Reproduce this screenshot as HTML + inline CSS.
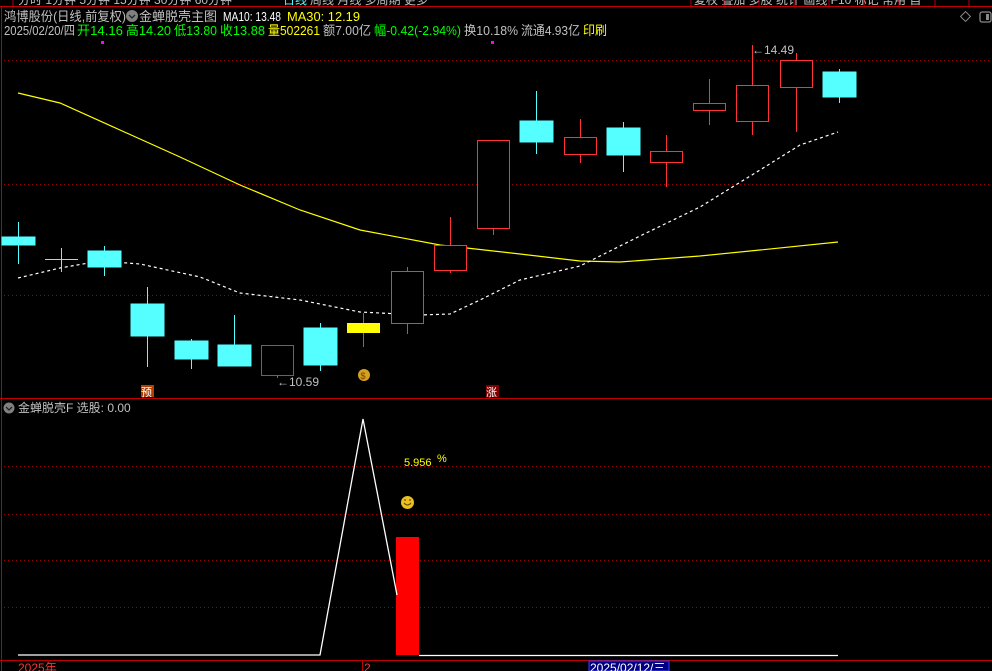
<!DOCTYPE html>
<html><head><meta charset="utf-8"><style>
html,body{margin:0;padding:0;background:#000;width:992px;height:671px;overflow:hidden}
svg{display:block}
text{font-family:"Liberation Sans","Noto Sans CJK SC",sans-serif}
</style></head><body>
<svg width="992" height="671" viewBox="0 0 992 671" xmlns="http://www.w3.org/2000/svg">
<rect width="992" height="671" fill="#000"/>
<g font-size="12" fill="#c0c0c0">
<text x="18" y="4">分时 1分钟 5分钟 15分钟 30分钟 60分钟</text>
<text x="283" y="4" fill="#55ffff">日线</text>
<text x="310" y="4">周线 月线 多周期 更多</text>
<text x="694" y="4">复权 叠加 多股 统计 画线 F10 标记 常用 自</text>
</g>
<line x1="0" y1="6.5" x2="992" y2="6.5" stroke="#c00000"/>
<g stroke="#c00000"><line x1="13" y1="0" x2="13" y2="6"/><line x1="691" y1="0" x2="691" y2="6"/><line x1="724" y1="0" x2="724" y2="6"/><line x1="759" y1="0" x2="759" y2="6"/><line x1="794" y1="0" x2="794" y2="6"/><line x1="829" y1="0" x2="829" y2="6"/><line x1="864" y1="0" x2="864" y2="6"/><line x1="899" y1="0" x2="899" y2="6"/><line x1="935" y1="0" x2="935" y2="6"/><line x1="969" y1="0" x2="969" y2="6"/></g>
<line x1="1.5" y1="7" x2="1.5" y2="671" stroke="#c00000"/>
<g font-size="13" lengthAdjust="spacingAndGlyphs">
<text x="4" y="21" fill="#c0c0c0" textLength="122" lengthAdjust="spacingAndGlyphs">鸿博股份(日线,前复权)</text>
<text x="139" y="21" fill="#c0c0c0" textLength="78" lengthAdjust="spacingAndGlyphs">金蝉脱壳主图</text>
<text x="223" y="21" fill="#ffffff" textLength="58" lengthAdjust="spacingAndGlyphs">MA10: 13.48</text>
<text x="287" y="21" fill="#ffff00" textLength="73" lengthAdjust="spacingAndGlyphs">MA30: 12.19</text>
<text x="4" y="35" fill="#c0c0c0" textLength="71" lengthAdjust="spacingAndGlyphs">2025/02/20/四</text>
<text x="77" y="35" fill="#00ff00" textLength="46" lengthAdjust="spacingAndGlyphs">开14.16</text>
<text x="126" y="35" fill="#00ff00" textLength="45" lengthAdjust="spacingAndGlyphs">高14.20</text>
<text x="174" y="35" fill="#00ff00" textLength="43" lengthAdjust="spacingAndGlyphs">低13.80</text>
<text x="220" y="35" fill="#00ff00" textLength="45" lengthAdjust="spacingAndGlyphs">收13.88</text>
<text x="268" y="35" fill="#ffff00" textLength="52" lengthAdjust="spacingAndGlyphs">量502261</text>
<text x="323" y="35" fill="#c0c0c0" textLength="48" lengthAdjust="spacingAndGlyphs">额7.00亿</text>
<text x="374" y="35" fill="#00ff00" textLength="87" lengthAdjust="spacingAndGlyphs">幅-0.42(-2.94%)</text>
<text x="464" y="35" fill="#c0c0c0" textLength="54" lengthAdjust="spacingAndGlyphs">换10.18%</text>
<text x="521" y="35" fill="#c0c0c0" textLength="59" lengthAdjust="spacingAndGlyphs">流通4.93亿</text>
<text x="583" y="35" fill="#ffff00" textLength="24" lengthAdjust="spacingAndGlyphs">印刷</text>
</g>
<circle cx="132" cy="16" r="6" fill="#808080"/><path d="M129 15l3 3 3-3" stroke="#222" fill="none" stroke-width="1.3"/>
<rect x="962" y="13" width="7" height="7" fill="none" stroke="#888" transform="rotate(45 965.5 16.5)"/>
<rect x="980" y="12" width="11" height="10" rx="2" fill="none" stroke="#888" stroke-width="1.3"/><rect x="986" y="14" width="3" height="6" fill="#888"/>
<rect x="101" y="41" width="3" height="3" fill="#ff00ff"/><rect x="491" y="41" width="3" height="3" fill="#ff00ff"/>
<g stroke="#a00000" stroke-dasharray="1,3">
<line x1="4" y1="60.5" x2="992" y2="60.5"/><line x1="4" y1="184.5" x2="992" y2="184.5"/><line x1="4" y1="295.5" x2="992" y2="295.5"/>
<line x1="4" y1="466.5" x2="992" y2="466.5"/><line x1="4" y1="514.5" x2="992" y2="514.5"/><line x1="4" y1="560.5" x2="992" y2="560.5"/><line x1="4" y1="607.5" x2="992" y2="607.5"/>
</g>
<polyline fill="none" stroke="#ffff00" stroke-width="1.2" points="18,93 60,103 120,130 180,157 240,185 300,210 360,230 440,245 520,254 580,261 620,262 700,256 760,250 838,242"/>
<polyline fill="none" stroke="#ffffff" stroke-width="1.2" stroke-dasharray="3,3" points="18,278 60,268 100,261 140,264 200,277 240,293 300,300 360,312 420,315 450,314 480,300 520,280 580,266 640,236 700,207 760,170 800,145 838,132"/>
<g stroke="#55ffff" fill="#55ffff">
<line x1="18.5" y1="222" x2="18.5" y2="264"/><rect x="2" y="237" width="33" height="8"/>
<line x1="61.5" y1="248" x2="61.5" y2="272"/><line x1="45" y1="259.5" x2="78" y2="259.5"/>
<line x1="104.5" y1="246" x2="104.5" y2="276"/><rect x="88" y="251" width="33" height="16"/>
<line x1="147.5" y1="287" x2="147.5" y2="367"/><rect x="131" y="304" width="33" height="32"/>
<line x1="191.5" y1="339" x2="191.5" y2="369"/><rect x="175" y="341" width="33" height="18"/>
<line x1="234.5" y1="315" x2="234.5" y2="366"/><rect x="218" y="345" width="33" height="21"/>
<line x1="320.5" y1="323" x2="320.5" y2="371"/><rect x="304" y="328" width="33" height="37"/>
<line x1="536.5" y1="91" x2="536.5" y2="154"/><rect x="520" y="121" width="33" height="21"/>
<line x1="623.5" y1="122" x2="623.5" y2="172"/><rect x="607" y="128" width="33" height="27"/>
<line x1="839.5" y1="69" x2="839.5" y2="103"/><rect x="823" y="72" width="33" height="25"/>
</g>
<g stroke="#ff3333" fill="none">
<line x1="277.5" y1="375" x2="277.5" y2="378"/><rect x="261.5" y="345.5" width="32" height="30" stroke="#dd3333"/>
<line x1="407.5" y1="267" x2="407.5" y2="334"/><rect x="391.5" y="271.5" width="32" height="52" fill="#000"/>
<line x1="450.5" y1="217" x2="450.5" y2="273"/><rect x="434.5" y="245.5" width="32" height="25" fill="#000"/>
<line x1="493.5" y1="228" x2="493.5" y2="235"/><rect x="477.5" y="140.5" width="32" height="88" fill="#000"/>
<line x1="580.5" y1="119" x2="580.5" y2="163"/><rect x="564.5" y="137.5" width="32" height="17" fill="#000"/>
<line x1="666.5" y1="135" x2="666.5" y2="187"/><rect x="650.5" y="151.5" width="32" height="11" fill="#000"/>
<line x1="709.5" y1="79" x2="709.5" y2="125"/><rect x="693.5" y="103.5" width="32" height="7" fill="#000"/>
<line x1="752.5" y1="45" x2="752.5" y2="135"/><rect x="736.5" y="85.5" width="32" height="36" fill="#000"/>
<line x1="796.5" y1="53" x2="796.5" y2="132"/><rect x="780.5" y="60.5" width="32" height="27" fill="#000"/>
</g>
<line x1="363.5" y1="313" x2="363.5" y2="347" stroke="#ff3333"/><rect x="347" y="323" width="33" height="10" fill="#ffff00"/>
<g font-size="12" fill="#c0c0c0">
<text x="277" y="386">←10.59</text>
<text x="752" y="54">←14.49</text>
</g>
<circle cx="364" cy="375" r="6" fill="#d4a020"/><text x="360.5" y="379" font-size="9" fill="#7a3b00">$</text>
<rect x="141" y="385" width="13" height="12" fill="#b04000"/><text x="141" y="396" font-size="11" fill="#fff">预</text>
<rect x="486" y="385" width="13" height="12" fill="#800000"/><text x="486" y="396" font-size="11" fill="#fff">涨</text>
<line x1="0" y1="398.5" x2="992" y2="398.5" stroke="#c00000"/>
<circle cx="9" cy="408" r="5.5" fill="#808080"/><path d="M6 407l3 3 3-3" stroke="#222" fill="none" stroke-width="1.3"/>
<text x="18" y="412" font-size="12" fill="#c0c0c0">金蝉脱壳F  选股: 0.00</text>
<rect x="396" y="537" width="23" height="118" fill="#ff0000"/>
<polyline fill="none" stroke="#fff" stroke-width="1.3" points="18,655 320,655 363,419 397,595"/>
<line x1="419" y1="655.5" x2="838" y2="655.5" stroke="#fff" stroke-width="1.3"/>
<text x="404" y="466" font-size="11" fill="#ffff00">5.956</text><text x="437" y="462" font-size="11" fill="#ffff00">%</text>
<circle cx="407.5" cy="502.5" r="6.5" fill="#e8c020"/><path d="M404 503q3.5 4 7 0" stroke="#704000" fill="none"/><circle cx="405" cy="500" r="0.9" fill="#704000"/><circle cx="410" cy="500" r="0.9" fill="#704000"/>
<line x1="0" y1="660.5" x2="992" y2="660.5" stroke="#c00000"/>
<line x1="362.5" y1="661" x2="362.5" y2="671" stroke="#c00000"/>
<text x="18" y="672" font-size="12" fill="#ff3333">2025年</text>
<text x="364" y="672" font-size="12" fill="#ff3333">2</text>
<rect x="589" y="661" width="80" height="10" fill="#000080" stroke="#4040ff"/>
<text x="590" y="672" font-size="12" fill="#ffffff">2025/02/12/三</text>
</svg>
</body></html>
